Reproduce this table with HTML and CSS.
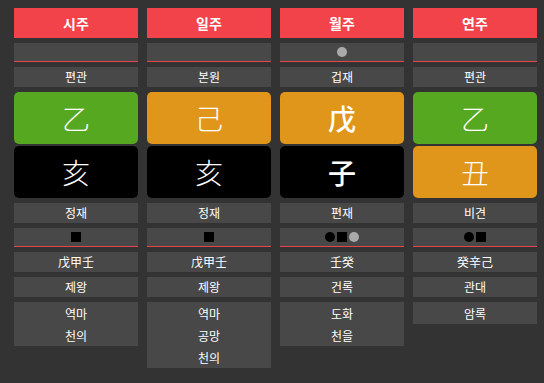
FILE: index.html
```html
<!DOCTYPE html>
<html lang="ko">
<head>
<meta charset="utf-8">
<link rel="stylesheet" href="styles.css">
</head>
<body>
<div class="board">
  <div class="col">
    <div class="head">시주</div>
    <div class="cell mark"></div>
    <div class="cell">편관</div>
    <div class="pillar">
      <div class="glyph green">乙</div>
      <div class="glyph black">亥</div>
    </div>
    <div class="cell">정재</div>
    <div class="cell mark"><span class="sq"></span></div>
    <div class="cell">戊甲壬</div>
    <div class="cell">제왕</div>
    <div class="list"><div>역마</div><div>천의</div></div>
  </div>
  <div class="col">
    <div class="head">일주</div>
    <div class="cell mark"></div>
    <div class="cell">본원</div>
    <div class="pillar">
      <div class="glyph orange">己</div>
      <div class="glyph black">亥</div>
    </div>
    <div class="cell">정재</div>
    <div class="cell mark"><span class="sq"></span></div>
    <div class="cell">戊甲壬</div>
    <div class="cell">제왕</div>
    <div class="list"><div>역마</div><div>공망</div><div>천의</div></div>
  </div>
  <div class="col">
    <div class="head">월주</div>
    <div class="cell mark"><span class="dot grey"></span></div>
    <div class="cell">겁재</div>
    <div class="pillar">
      <div class="glyph orange bold">戊</div>
      <div class="glyph black bold">子</div>
    </div>
    <div class="cell">편재</div>
    <div class="cell mark"><span class="dot"></span><span class="sq"></span><span class="dot grey"></span></div>
    <div class="cell">壬癸</div>
    <div class="cell">건록</div>
    <div class="list"><div>도화</div><div>천을</div></div>
  </div>
  <div class="col">
    <div class="head">연주</div>
    <div class="cell mark"></div>
    <div class="cell">편관</div>
    <div class="pillar">
      <div class="glyph green">乙</div>
      <div class="glyph orange">丑</div>
    </div>
    <div class="cell">비견</div>
    <div class="cell mark"><span class="dot"></span><span class="sq"></span></div>
    <div class="cell">癸辛己</div>
    <div class="cell">관대</div>
    <div class="list"><div>암록</div></div>
  </div>
</div>
</body>
</html>
```
FILE: styles.css
```css
html, body {
  margin: 0;
  background: #333333;
}
body {
  padding: 8px 7px 0 14px;
  font-family: "Noto Sans CJK KR", "Noto Sans", sans-serif;
  color: #ffffff;
}
.board {
  display: grid;
  grid-template-columns: repeat(4, 124px);
  column-gap: 9px;
  align-items: start;
}
.col {
  display: flex;
  flex-direction: column;
  gap: 5px;
}
.head {
  height: 30px;
  background: #f2434a;
  font-size: 14px;
  font-weight: 700;
  display: flex;
  align-items: center;
  justify-content: center;
}
.cell {
  height: 20px;
  background: #484848;
  font-size: 12px;
  display: flex;
  align-items: center;
  justify-content: center;
  line-height: 1;
}
.cell.mark {
  height: 18px;
  border-bottom: 1px solid #e8454b;
  gap: 2px;
}
.sq {
  display: inline-block;
  width: 10px;
  height: 10px;
  background: #000;
}
.dot {
  display: inline-block;
  width: 10px;
  height: 10px;
  border-radius: 50%;
  background: #000;
}
.dot.grey {
  background: #aaaaaa;
}
.pillar {
  display: flex;
  flex-direction: column;
  gap: 2px;
}
.glyph {
  height: 52px;
  border-radius: 5px;
  display: flex;
  align-items: center;
  justify-content: center;
  font-size: 28px;
  font-weight: 300;
  line-height: 1;
}
.glyph.bold {
  font-weight: 500;
}
.green { background: #55a820; }
.orange { background: #e0961a; }
.black { background: #000000; }
.list {
  background: #484848;
  font-size: 12px;
  display: flex;
  flex-direction: column;
}
.list div {
  height: 22px;
  display: flex;
  align-items: center;
  justify-content: center;
}
```
